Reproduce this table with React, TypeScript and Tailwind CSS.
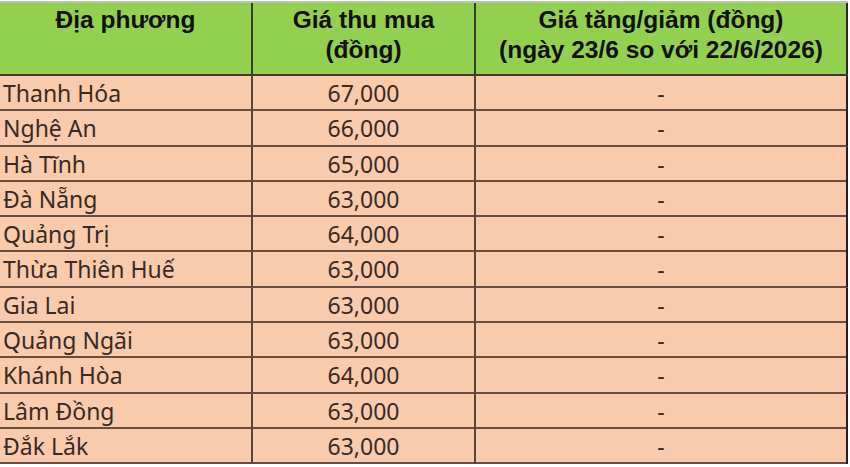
import React from "react";

const rows: [string, string][] = [
  ["Thanh Hóa", "67,000"],
  ["Nghệ An", "66,000"],
  ["Hà Tĩnh", "65,000"],
  ["Đà Nẵng", "63,000"],
  ["Quảng Trị", "64,000"],
  ["Thừa Thiên Huế", "63,000"],
  ["Gia Lai", "63,000"],
  ["Quảng Ngãi", "63,000"],
  ["Khánh Hòa", "64,000"],
  ["Lâm Đồng", "63,000"],
  ["Đắk Lắk", "63,000"],
];

export default function App() {
  return (
    <div className="w-[850px] h-[467px] bg-white overflow-hidden pt-[1px]">
      <div className="w-[848px] border-t-[2px] border-t-[#b8c4b0]">
        <div className="grid grid-cols-[253px_223px_372px] h-[73px] bg-[#92d050] border-b-[2px] border-b-[#3f3a2a] text-[#111] font-bold text-[24.5px] leading-[30px] [font-family:'Liberation_Sans',Arial,sans-serif]">
          <div className="border-r-[2px] border-r-[#33402a] text-center pt-[2px]">Địa phương</div>
          <div className="border-r-[2px] border-r-[#33402a] text-center pt-[2px]">
            Giá thu mua<br />(đồng)
          </div>
          <div className="border-r-[2px] border-r-[#2a2a2a] text-center pt-[2px]">
            Giá tăng/giảm (đồng)<br />(ngày 23/6 so với 22/6/2026)
          </div>
        </div>
        {rows.map(([name, price]) => (
          <div
            key={name}
            className="grid grid-cols-[253px_223px_372px] h-[35.3px] bg-[#f8cbad] border-b-[2px] border-b-[#6a4c3c] text-[#3a2a22] text-[23px] leading-[35px] [font-family:'Noto_Sans','Open_Sans',sans-serif]"
          >
            <div className="border-r-[2px] border-r-[#5a4436] pl-[3px]">{name}</div>
            <div className="border-r-[2px] border-r-[#5a4436] text-center">{price}</div>
            <div className="border-r-[2px] border-r-[#2a2020] text-center">-</div>
          </div>
        ))}
      </div>
    </div>
  );
}
